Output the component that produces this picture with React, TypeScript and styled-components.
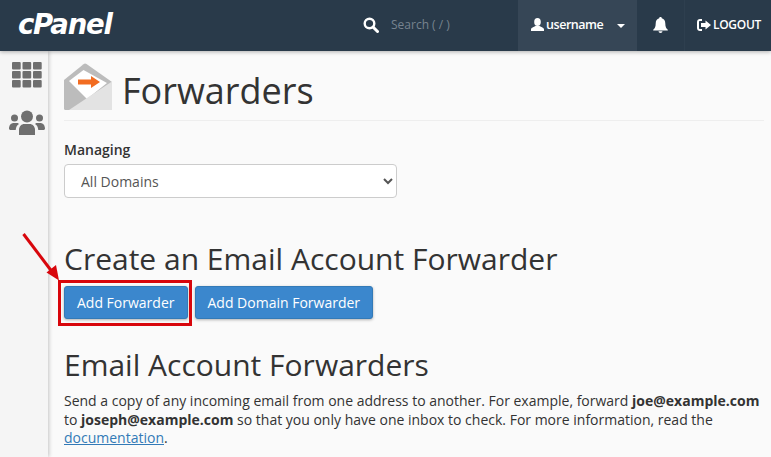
import React from "react";
import styled, { createGlobalStyle } from "styled-components";

const Global = createGlobalStyle`
  html, body { margin: 0; padding: 0; background: #fafafa; overflow: hidden; }
  body { font-family: "Open Sans", "Liberation Sans", sans-serif; color: #333; }
  * { box-sizing: border-box; }
`;
const Page = styled.div`width: 771px; height: 457px; overflow: hidden; position: relative; display: flex; flex-direction: column;`;
const Nav = styled.header`height: 51px; flex: none; background: #293a4a; display: flex; align-items: stretch; color: #fff; box-shadow: 0 1px 4px rgba(0,0,0,.3); position: relative; z-index: 2;`;
const Logo = styled.div`width: 363px; padding: 6px 0 0 18px; font: italic 700 27.5px/36px "DejaVu Sans", sans-serif; letter-spacing: -1.2px; color: #fff;`;
const Search = styled.div`width: 155px; display: flex; align-items: center; gap: 12px; color: #77838f; font-size: 12px; padding-bottom: 2px;`;
const UserCell = styled.div`width: 119px; background: #364656; display: flex; align-items: center; padding: 0 0 2px 13px; font-size: 12.5px; font-weight: 600; letter-spacing: -.45px;`;
const Caret = styled.span`width: 0; height: 0; margin-left: 14px; margin-top: 2px; border: 4px solid transparent; border-top-color: #fff; border-bottom: 0;`;
const BellCell = styled.div`width: 48px; display: flex; align-items: center; justify-content: center; padding-bottom: 2px; border-right: 1px solid #2e3f4f;`;
const LogoutCell = styled.div`flex: 1; display: flex; align-items: center; gap: 2px; padding: 0 0 2px 12px; font-size: 12px; letter-spacing: -.3px; font-weight: 600;`;
const Body = styled.div`flex: 1; display: flex; min-height: 0;`;
const Side = styled.aside`width: 48px; flex: none; background: #f5f5f5; box-shadow: 1px 0 4px rgba(0,0,0,.22); display: flex; flex-direction: column; align-items: center; padding: 11px 0 0 5px; gap: 22px;`;
const Main = styled.main`flex: 1; padding: 12px 11px 0 16px; position: relative;`;
const Header = styled.div`height: 58px; display: flex; align-items: flex-start; gap: 10px; border-bottom: 1px solid #eee;`;
const Title = styled.h1`margin: 3px 0 0; font-size: 36px; line-height: 50px; font-weight: 400; color: #333;`;
const Label = styled.label`display: block; margin-top: 19px; font-size: 14px; line-height: 20px; font-weight: 600; color: #333;`;
const SelectBox = styled.select`display: block; margin-top: 4px; width: 333px; height: 34px; padding: 0 12px; background: #fff; border: 1px solid #ccc; border-radius: 4px; font: 14px "Open Sans", sans-serif; color: #555;`;
const H2 = styled.h2<{ $top: number }>`margin: ${p => p.$top}px 0 0; font-size: 30px; line-height: 36px; font-weight: 400; color: #333;`;
const Buttons = styled.div`display: flex; gap: 7px; margin-top: 9px;`;
const Button = styled.button`height: 33px; padding: 0 12px; background: #3b87cd; color: #fff; border: 1px solid #337ab7; border-radius: 3px; font: 400 14px "Open Sans", sans-serif; box-shadow: 0 1px 3px rgba(0,0,0,.3);`;
const Para = styled.p`margin: 9px 0 0; font-size: 14px; line-height: 18.5px; color: #333; width: 700px;`;
const DocLink = styled.a`color: #337ab7; text-decoration: underline;`;
const RedBox = styled.div`position: absolute; left: 58px; top: 280px; width: 134px; height: 46px; border: 3px solid #d8060c;`;
const Arrow = styled.svg`position: absolute; left: 20px; top: 230px;`;

const Grid = () => (
  <svg width="30" height="26" viewBox="0 0 30 26" fill="#6f6f6f">
    {[0, 9, 18].flatMap(y => [0, 10.5, 21].map(x => <rect key={`${x}-${y}`} x={x} y={y} width="8.7" height="7.4" rx="1" />))}
  </svg>
);
const Users = () => (
  <svg width="36" height="26" viewBox="0 0 36 26" fill="#6f6f6f">
    <circle cx="18" cy="6.500" r="6" /><circle cx="5.500" cy="8" r="3.500" /><circle cx="30.500" cy="8" r="3.500" />
    <path d="M10 25v-5c0-4 3-6 5-6h6c2 0 5 2 5 6v5z" />
    <path d="M0 19c0-4 2-6 5-6h3c1 0 1.500 .5 2 1-2 1-3 3-3.300 6H1z" />
    <path d="M36 19c0-4-2-6-5-6h-3c-1 0-1.500 .5-2 1 2 1 3 3 3.300 6H35z" />
  </svg>
);
const SearchIcon = () => (
  <svg width="16" height="16" viewBox="0 0 16 16" fill="none" stroke="#fff" strokeWidth="2.400">
    <circle cx="6.500" cy="6.500" r="4.800" /><path d="M10 10l4.500 4.500" strokeWidth="3" strokeLinecap="round" />
  </svg>
);
const UserIcon = () => (
  <svg width="13" height="13" viewBox="0 0 13 13" fill="#fff" style={{ marginRight: 2 }}>
    <ellipse cx="6.500" cy="4" rx="3.300" ry="4" /><path d="M0 13v-1.500c0-2 3-2.500 4.500-3.500h4c1.500 1 4.500 1.500 4.500 3.500V13z" />
  </svg>
);
const Bell = () => (
  <svg width="15" height="16" viewBox="0 0 15 16" fill="#fff">
    <path d="M7.500 0c1 0 1.300 .7 1.300 1.300C11 2 12.300 3.800 12.300 6.500c0 3.500 1 4.800 2.500 6.300V13.500H.2v-.7c1.500-1.500 2.500-2.800 2.500-6.300C2.700 3.800 4 2 6.200 1.300 6.200 .7 6.500 0 7.500 0z" />
    <path d="M5.500 14.300h4a2 1.700 0 0 1-4 0z" />
  </svg>
);
const LogoutIcon = () => (
  <svg width="14" height="12" viewBox="0 0 14 12" fill="#fff">
    <path d="M5 0v2H3C2.400 2 2 2.400 2 3v6c0 .6.4 1 1 1h2v2H3C1.300 12 0 10.700 0 9V3C0 1.300 1.300 0 3 0z" />
    <path d="M4 4h4.500V1.500L14 6l-5.500 4.500V8H4z" />
  </svg>
);
const EnvelopeIcon = () => (
  <svg width="48" height="48" viewBox="0 0 48 48" style={{ flex: "none" }}>
    <path d="M0 17 19.500 1.200Q21 0 22.500 1L48 19V47H1.500Q0 47 0 45.500z" fill="#bcbcbc" />
    <path d="M19.500 7 5 18 23 36 43 20z" fill="#fff" />
    <path d="M5 47 23 35 48 18.500V47z" fill="#e3e3e3" />
    <path d="M14 16.500H27V13L36 19 27 25V21.500H14z" fill="#f26c21" />
  </svg>
);
const RedArrow = () => (
  <Arrow width="44" height="54" viewBox="0 0 44 54">
    <path d="M3.500 4 33 43" stroke="#d8060c" strokeWidth="3" fill="none" />
    <path d="M39 50.500 26.500 42.500 36 35z" fill="#d8060c" />
  </Arrow>
);

export default function App() {
  return (
    <Page>
      <Global />
      <Nav>
        <Logo>cPanel</Logo>
        <Search><SearchIcon /><span>Search ( / )</span></Search>
        <UserCell><UserIcon />username<Caret /></UserCell>
        <BellCell><Bell /></BellCell>
        <LogoutCell><LogoutIcon />LOGOUT</LogoutCell>
      </Nav>
      <Body>
        <Side><Grid /><Users /></Side>
        <Main>
          <Header><EnvelopeIcon /><Title>Forwarders</Title></Header>
          <Label>Managing</Label>
          <SelectBox defaultValue="all"><option value="all">All Domains</option></SelectBox>
          <H2 $top={43}>Create an Email Account Forwarder</H2>
          <Buttons><Button>Add Forwarder</Button><Button>Add Domain Forwarder</Button></Buttons>
          <H2 $top={28}>Email Account Forwarders</H2>
          <Para>
            Send a copy of any incoming email from one address to another. For example, forward <b>joe@example.com</b> to <b>joseph@example.com</b> so that you only have one inbox to check. For more information, read the <DocLink href="#">documentation</DocLink>.
          </Para>
        </Main>
      </Body>
      <RedBox />
      <RedArrow />
    </Page>
  );
}
